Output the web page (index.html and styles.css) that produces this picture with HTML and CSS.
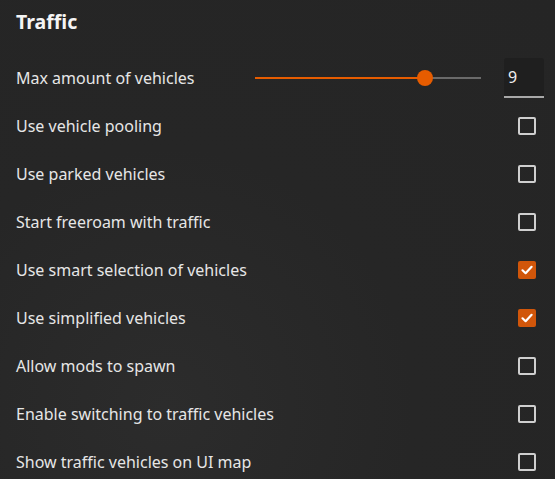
FILE: index.html
```html
<!DOCTYPE html>
<html>
<head>
<meta charset="utf-8">
<link rel="stylesheet" href="styles.css">
</head>
<body>
<div class="panel">
  <h1 class="title">Traffic</h1>
  <div class="row">
    <span class="label">Max amount of vehicles</span>
    <div class="slider">
      <div class="track-fill" style="width: 170px"></div>
      <div class="thumb"></div>
      <div class="track-rest"></div>
    </div>
    <div class="num">9</div>
  </div>
  <div class="row"><span class="label">Use vehicle pooling</span><span class="box"></span></div>
  <div class="row"><span class="label">Use parked vehicles</span><span class="box"></span></div>
  <div class="row"><span class="label">Start freeroam with traffic</span><span class="box"></span></div>
  <div class="row"><span class="label">Use smart selection of vehicles</span><span class="box checked"><svg viewBox="0 0 18 18" width="18" height="18"><path d="M4.5 9.3 L7.6 12.2 L13.6 5.8" fill="none" stroke="#fff" stroke-width="2.2" stroke-linecap="round" stroke-linejoin="round"/></svg></span></div>
  <div class="row"><span class="label">Use simplified vehicles</span><span class="box checked"><svg viewBox="0 0 18 18" width="18" height="18"><path d="M4.5 9.3 L7.6 12.2 L13.6 5.8" fill="none" stroke="#fff" stroke-width="2.2" stroke-linecap="round" stroke-linejoin="round"/></svg></span></div>
  <div class="row"><span class="label">Allow mods to spawn</span><span class="box"></span></div>
  <div class="row"><span class="label">Enable switching to traffic vehicles</span><span class="box"></span></div>
  <div class="row"><span class="label">Show traffic vehicles on UI map</span><span class="box"></span></div>
</div>
</body>
</html>
```
FILE: styles.css
```css
html, body {
  margin: 0;
  padding: 0;
  height: 100%;
}
body {
  background: radial-gradient(ellipse at 30% 85%, #2c2c2c 0%, #262626 45%, #252525 100%);
  font-family: "Noto Sans", "Open Sans", sans-serif;
  color: #e6e6e6;
  overflow: hidden;
}
.panel {
  padding: 10px 0 0 16px;
}
.title {
  margin: 0 0 20px 0;
  font-size: 19.5px;
  line-height: 24px;
  font-weight: 700;
  color: #f4f4f4;
}
.row {
  height: 48px;
  display: flex;
  align-items: center;
}
.label {
  flex: 1;
  font-size: 16px;
  line-height: 20px;
}
.slider {
  width: 226px;
  height: 16px;
  display: flex;
  align-items: center;
  margin-right: 23px;
}
.track-fill {
  height: 2px;
  background: #e65c00;
}
.thumb {
  width: 16px;
  height: 16px;
  border-radius: 50%;
  background: #e65c00;
  margin: 0 -8px;
  position: relative;
  z-index: 1;
}
.track-rest {
  flex: 1;
  height: 2px;
  background: #6a6a6a;
}
.num {
  width: 40px;
  height: 40px;
  box-sizing: border-box;
  background: #1f1f1f;
  border-bottom: 2px solid #a8a8a8;
  border-radius: 3px 3px 0 0;
  font-size: 16px;
  line-height: 38px;
  padding-left: 4px;
  margin-right: 11px;
  color: #efefef;
}
.box {
  width: 18px;
  height: 18px;
  box-sizing: border-box;
  border: 2px solid #cfcfcf;
  border-radius: 2px;
  margin-right: 19px;
  display: flex;
  align-items: center;
  justify-content: center;
}
.box.checked {
  background: #d1560a;
  border: none;
}
.box svg {
  display: block;
}
```
